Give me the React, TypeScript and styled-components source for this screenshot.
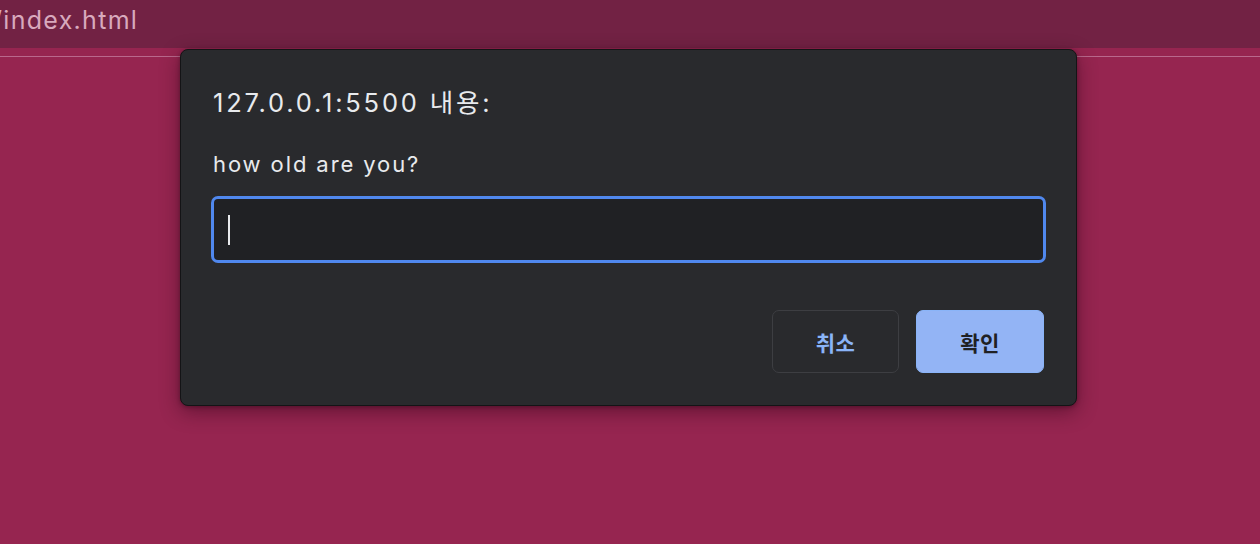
import React from "react";
import styled, { createGlobalStyle } from "styled-components";

const Global = createGlobalStyle`
  html, body {
    margin: 0;
    padding: 0;
    background: #962550;
    height: 100%;
    overflow: hidden;
  }
  #root {
    height: 100%;
  }
  * { box-sizing: border-box; }
`;

const Page = styled.div`
  position: relative;
  width: 1260px;
  height: 544px;
  background: #962550;
  font-family: Inter, "Noto Sans CJK KR", "Noto Sans", sans-serif;
  overflow: hidden;
`;

const TopBar = styled.div`
  height: 48px;
  padding-bottom: 8px;
  background: #722244;
  display: flex;
  align-items: center;
  overflow: hidden;
`;

const Path = styled.span`
  margin-left: -7px;
  color: #d8a9bd;
  font-size: 25px;
  line-height: 30px;
  letter-spacing: 1.3px;
  white-space: nowrap;
`;

const Content = styled.div`
  padding-top: 8px;
`;

const Rule = styled.div`
  height: 1px;
  background: #b9688c;
`;

const Dialog = styled.div`
  position: absolute;
  left: 180px;
  top: 49px;
  width: 897px;
  height: 357px;
  background: #292a2d;
  border: 1px solid #141416;
  border-radius: 8px;
  box-shadow: 0 6px 20px rgba(40, 0, 20, 0.45), 0 1px 4px rgba(0, 0, 0, 0.3);
  padding: 38px 30px 32px 30px;
  display: flex;
  flex-direction: column;
`;

const Title = styled.div`
  color: #e8eaed;
  font-size: 25.5px;
  line-height: 30px;
  letter-spacing: 2.8px;
  padding-left: 2px;
`;

const Message = styled.div`
  margin-top: 33px;
  color: #e8eaed;
  font-size: 22px;
  line-height: 26px;
  letter-spacing: 1.9px;
  padding-left: 2px;
`;

const Field = styled.div`
  margin-top: 19px;
  height: 67px;
  background: #202124;
  border: 3px solid #5088ee;
  border-radius: 7px;
  display: flex;
  align-items: center;
  padding-left: 14px;
`;

const Caret = styled.span`
  display: block;
  width: 2px;
  height: 30px;
  background: #e8eaed;
`;

const Actions = styled.div`
  margin-top: 47px;
  display: flex;
  justify-content: flex-end;
  gap: 17px;
  padding-right: 2px;
`;

const Button = styled.button<{ $primary?: boolean }>`
  width: ${(p) => (p.$primary ? "128px" : "127px")};
  height: 63px;
  border-radius: 7px;
  font-family: Inter, "Noto Sans CJK KR", sans-serif;
  font-size: 21px;
  font-weight: 600;
  letter-spacing: 0.5px;
  cursor: pointer;
  border: 1px solid ${(p) => (p.$primary ? "#8ab4f8" : "#3d3e42")};
  background: ${(p) => (p.$primary ? "#93b4f5" : "transparent")};
  color: ${(p) => (p.$primary ? "#202124" : "#8ab4f8")};
  padding: 0;
`;

export default function App() {
  return (
    <Page>
      <Global />
      <TopBar>
        <Path>/index.html</Path>
      </TopBar>
      <Content>
        <Rule />
      </Content>
      <Dialog role="dialog">
        <Title>127.0.0.1:5500 내용:</Title>
        <Message>how old are you?</Message>
        <Field>
          <Caret />
        </Field>
        <Actions>
          <Button>취소</Button>
          <Button $primary>확인</Button>
        </Actions>
      </Dialog>
    </Page>
  );
}
